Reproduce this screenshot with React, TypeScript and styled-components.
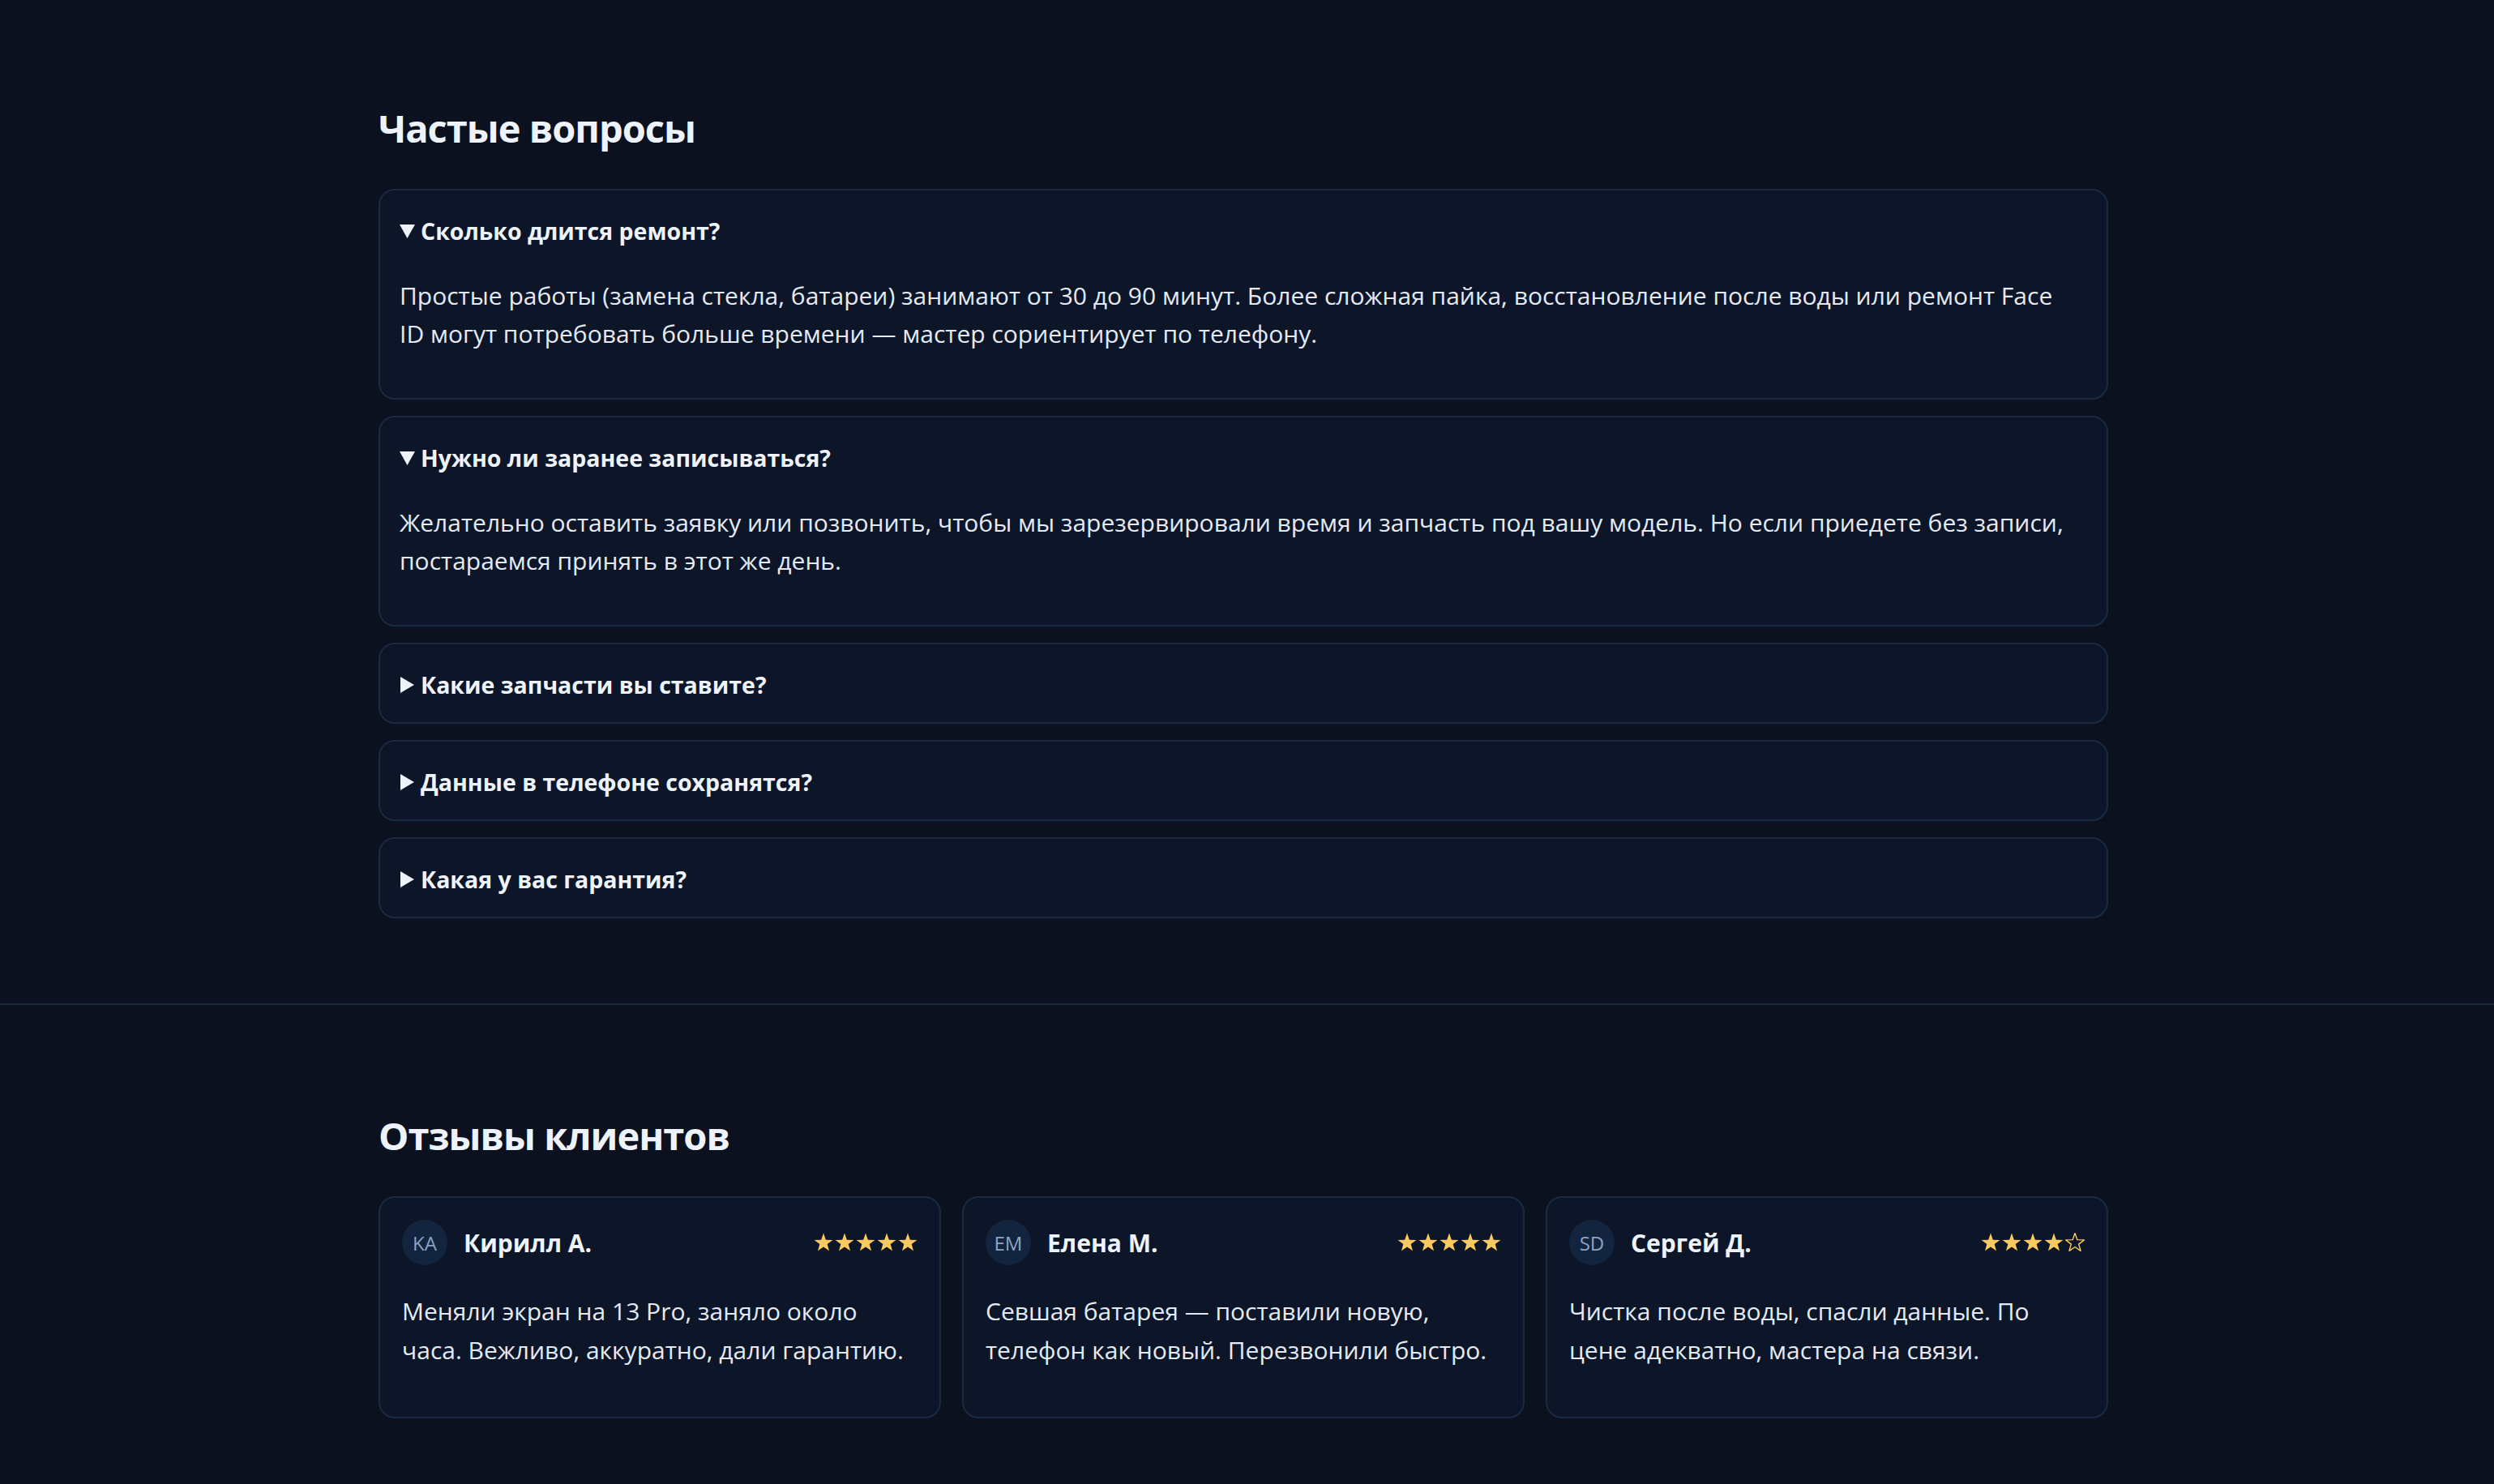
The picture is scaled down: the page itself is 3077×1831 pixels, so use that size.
import React from 'react'
import styled, { createGlobalStyle } from 'styled-components'

const GlobalStyle = createGlobalStyle`
  html, body {
    margin: 0;
    padding: 0;
    background: #0b111e;
  }
  body {
    font-family: "Open Sans", "Noto Sans", sans-serif;
    color: #e4eaf4;
  }
  * {
    box-sizing: border-box;
  }
`

const Section = styled.section<{ $top: number; $bottom: number; $divider?: boolean }>`
  padding: ${({ $top }) => $top}px 9px ${({ $bottom }) => $bottom}px 0;
  border-top: ${({ $divider }) => ($divider ? '2px solid #1a2740' : 'none')};
`

const Inner = styled.div`
  max-width: 2134px;
  margin: 0 auto;
`

const Title = styled.h2`
  margin: 0 0 45px;
  font-size: 47px;
  line-height: 60px;
  font-weight: 700;
  letter-spacing: -1px;
  color: #eef3fb;
`

const FaqList = styled.div`
  display: flex;
  flex-direction: column;
  gap: 20px;
`

const FaqItem = styled.details`
  background: #0d1628;
  border: 2px solid #1b2a44;
  border-radius: 20px;
  padding: 0 24px;
`

const Question = styled.summary`
  list-style: none;
  display: flex;
  align-items: center;
  gap: 7px;
  padding: 26px 0 22px;
  font-size: 28.5px;
  line-height: 48px;
  font-weight: 700;
  color: #eef3fb;
  cursor: pointer;

  &::-webkit-details-marker {
    display: none;
  }

  svg {
    flex-shrink: 0;
    fill: #eef3fb;
  }
`

const Answer = styled.p`
  margin: 10px 12px 56px 0;
  font-size: 30px;
  line-height: 47px;
`

const ReviewGrid = styled.div`
  display: grid;
  grid-template-columns: repeat(3, 1fr);
  gap: 26px;
`

const ReviewCard = styled.article`
  background: #0d1628;
  border: 2px solid #1b2a44;
  border-radius: 20px;
  padding: 27px;
`

const ReviewHead = styled.div`
  display: flex;
  align-items: center;
  gap: 20px;
  height: 56px;
`

const Avatar = styled.div`
  width: 56px;
  height: 56px;
  flex-shrink: 0;
  border-radius: 50%;
  background: #13243f;
  color: #8ca3c5;
  font-size: 24px;
  display: flex;
  align-items: center;
  justify-content: center;
`

const Name = styled.div`
  flex: 1;
  font-size: 30px;
  font-weight: 700;
  color: #eef3fb;
`

const Stars = styled.div`
  display: flex;
  gap: 2px;
`

const ReviewText = styled.p`
  margin: 33px 0 31px;
  font-size: 30px;
  line-height: 48px;
`

const faq = [
  {
    q: 'Сколько длится ремонт?',
    a: 'Простые работы (замена стекла, батареи) занимают от 30 до 90 минут. Более сложная пайка, восстановление после воды или ремонт Face ID могут потребовать больше времени — мастер сориентирует по телефону.',
    open: true,
  },
  {
    q: 'Нужно ли заранее записываться?',
    a: 'Желательно оставить заявку или позвонить, чтобы мы зарезервировали время и запчасть под вашу модель. Но если приедете без записи, постараемся принять в этот же день.',
    open: true,
  },
  { q: 'Какие запчасти вы ставите?', a: 'Оригинальные и проверенные качественные аналоги — на выбор.', open: false },
  { q: 'Данные в телефоне сохранятся?', a: 'В большинстве случаев да, но резервная копия не помешает.', open: false },
  { q: 'Какая у вас гарантия?', a: 'Гарантия на работы и запчасти — до 6 месяцев.', open: false },
]

const reviews = [
  { initials: 'KA', name: 'Кирилл А.', rating: 5, text: 'Меняли экран на 13 Pro, заняло около часа. Вежливо, аккуратно, дали гарантию.' },
  { initials: 'EM', name: 'Елена М.', rating: 5, text: 'Севшая батарея — поставили новую, телефон как новый. Перезвонили быстро.' },
  { initials: 'SD', name: 'Сергей Д.', rating: 4, text: 'Чистка после воды, спасли данные. По цене адекватно, мастера на связи.' },
]

const STAR = '12,0.6 14.88,8.64 23.41,8.89 16.66,14.11 19.05,22.31 12,17.5 4.95,22.31 7.34,14.11 0.59,8.89 9.12,8.64'

const Star = ({ filled }: { filled: boolean }) => (
  <svg width="24" height="24" viewBox="0 0 24 24">
    <polygon
      points={STAR}
      fill={filled ? '#fcc95e' : 'none'}
      stroke="#fcc95e"
      strokeWidth={filled ? 0 : 1.4}
      strokeLinejoin="round"
    />
  </svg>
)

const Marker = ({ open }: { open: boolean }) =>
  open ? (
    <svg width="19" height="20" viewBox="0 0 19 20">
      <polygon points="0,2 19,2 9.5,19" />
    </svg>
  ) : (
    <svg width="19" height="20" viewBox="0 0 19 20">
      <polygon points="1,0 18,10 1,20" />
    </svg>
  )

export default function App() {
  return (
    <>
      <GlobalStyle />
      <Section $top={128} $bottom={105}>
        <Inner>
          <Title>Частые вопросы</Title>
          <FaqList>
            {faq.map((item) => (
              <FaqItem key={item.q} open={item.open}>
                <Question>
                  <Marker open={item.open} />
                  {item.q}
                </Question>
                <Answer>{item.a}</Answer>
              </FaqItem>
            ))}
          </FaqList>
        </Inner>
      </Section>
      <Section $top={131} $bottom={82} $divider>
        <Inner>
          <Title>Отзывы клиентов</Title>
          <ReviewGrid>
            {reviews.map((r) => (
              <ReviewCard key={r.name}>
                <ReviewHead>
                  <Avatar>{r.initials}</Avatar>
                  <Name>{r.name}</Name>
                  <Stars>
                    {[0, 1, 2, 3, 4].map((i) => (
                      <Star key={i} filled={i < r.rating} />
                    ))}
                  </Stars>
                </ReviewHead>
                <ReviewText>{r.text}</ReviewText>
              </ReviewCard>
            ))}
          </ReviewGrid>
        </Inner>
      </Section>
    </>
  )
}
